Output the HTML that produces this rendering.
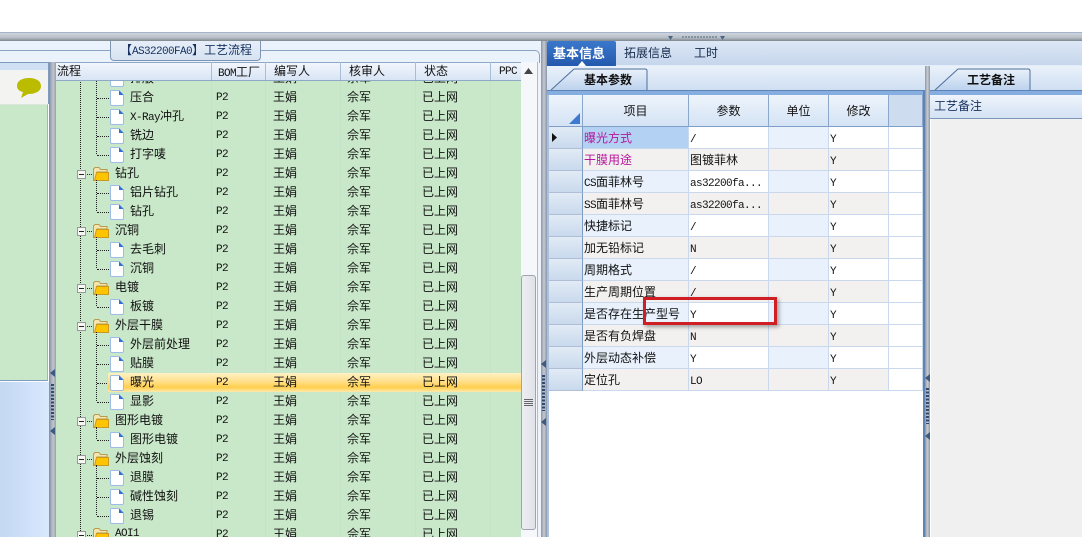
<!DOCTYPE html>
<html lang="zh"><head><meta charset="utf-8"><title>工艺流程</title>
<style>
html,body{margin:0;padding:0;background:#fff}
#p{position:relative;width:1082px;height:537px;overflow:hidden;background:#fff;font:12px/19px "WenQuanYi Zen Hei","Noto Sans CJK SC",sans-serif;color:#111}
#p div,#p svg{position:absolute}
.m{font-family:"Liberation Mono",monospace;font-size:11px;letter-spacing:-.6px}
#tree{left:56px;top:62px;width:465px;height:475px;overflow:hidden;background:#c9e7c9}
.r{left:-56px;width:521px;height:19px;white-space:nowrap}
.n,.f,.w,.s,.z{top:-1px}
.n{left:130px}.f{left:115px}.b{left:216px;top:1px}.w{left:273px}.s{left:347px}.z{left:422px}
#p svg.ic{left:110px;top:2px}#p svg.fd{left:93px;top:3px}#p svg.pb{left:77px;top:6px}
.vl{border-left:1px dotted #222;width:0}
.hl{left:97px;top:10px;width:12px;border-top:1px dotted #222;height:0}
.hl.k{left:87px;width:5px}
.cl{top:0;width:1px;height:475px;background:#c3e2c6}
.c{height:22px;line-height:22px;white-space:nowrap;overflow:hidden;border-right:1px solid #c9d8ec;border-bottom:1px solid #c9d8ec;box-sizing:border-box;padding-left:1px}
.c.m{line-height:26px}
.a{left:549px;width:34px;background:linear-gradient(#e2ebf6,#c9d9ec);border-right:1px solid #7c9cc4;border-bottom:1px solid #aebfd6}
.i{left:583px;width:106px}.v{left:689px;width:80px}.u{left:769px;width:60px}.x{left:829px;width:60px}.e{left:889px;width:34px;background:#fff}
.g{background:#f3f1ef}.l{background:#e8f1fc}.wh{background:#fff}
.h{top:95px;height:32px;line-height:32px;text-align:center;background:linear-gradient(#eef4fb,#d4e3f5);border-right:1px solid #8ba8cc;border-bottom:1px solid #7f9fc6;box-sizing:border-box}
.hd{top:62px;height:19px;line-height:18px;white-space:nowrap;box-sizing:border-box}
.sep{top:62px;width:1px;height:18px;background:#a9bdd6}
</style></head><body><div id="p">

<svg width="0" height="0" style="left:0;top:0"><defs>
<linearGradient id="tg" x1="0" y1="0" x2="0" y2="1"><stop offset="0" stop-color="#eaf1fa"/><stop offset="1" stop-color="#bcd2ee"/></linearGradient>
<g id="fi"><path d="M1.500.5H9L13.500 5V14Q13.500 15.500 12 15.500H2Q.5 15.500 .5 14V1.500Q.5.500 1.500.5Z" fill="#fff" stroke="#9dbce6"/><path d="M9 .5V5H13.500Z" fill="#2f6fd0"/></g>
<g id="fo"><path d="M.5 13.500V2L2 .5H6L7.500 2.500H14V5H4V13.500Z" fill="#f5e6b0" stroke="#b89a50"/><path d="M3.500 5.500H15.500V13.500H1.500Z" fill="#ffc400" stroke="#c99a20"/></g>
<g id="bx"><rect x=".5" y=".5" width="8" height="8" fill="#f6f6f2" stroke="#999"/><path d="M2 4.500H7" stroke="#222"/></g>
</defs></svg>

<!-- top chrome -->
<div style="left:0;top:32px;width:1082px;height:1px;background:#a4b3c9"></div>
<div style="left:0;top:33px;width:1082px;height:8px;background:linear-gradient(#cfd6df,#b7bdc5 60%,#7f858c)"></div>
<svg style="left:666px;top:36px" width="62" height="5"><path d="M2 0H7L4.500 4ZM59 0H54L56.500 4Z" fill="#4d6480"/><path d="M16 1H51" stroke="#4d6480" stroke-dasharray="2 1"/></svg>

<!-- left panel -->
<div style="left:0;top:41px;width:541px;height:21px;background:#eaf2fb"></div>
<div style="left:537px;top:62px;width:4px;height:475px;background:#eef3fa;border-left:1px solid #a9bdd6;box-sizing:border-box"></div>
<div style="left:0;top:50px;width:111px;height:1px;background:#8ba3c2"></div>
<div style="left:260px;top:50px;width:279px;height:12px;border-top:1px solid #8ba3c2;border-right:1px solid #8ba3c2;border-radius:0 5px 0 0"></div>
<div style="left:110px;top:41px;width:151px;height:20px;background:linear-gradient(#e6eef8,#d7e3f2);border:1px solid #7f95b2;border-top:0;border-radius:0 0 4px 4px;box-sizing:border-box;padding-left:9px;line-height:18px;color:#16315f;white-space:nowrap">【<span class="m">AS32200FA0</span>】工艺流程</div>

<div style="left:0;top:62px;width:49px;height:42px;background:#f3f3f1;border-top:1px solid #7f9bbd;border-right:1px solid #7f9bbd;box-sizing:border-box"></div>
<div style="left:0;top:63px;width:48px;height:7px;background:#cfe0f5"></div>
<svg style="left:16px;top:77px" width="26" height="22"><path d="M13 1C20 1 25 4 25 9C25 14 20 17 12 17L5 21L7 15C3 14 1 12 1 9C1 4 6 1 13 1Z" fill="#bbbb00"/></svg>
<div style="left:0;top:104px;width:48px;height:277px;background:#c9e7c9;border-right:1px solid #9fb7ac;border-bottom:1px solid #7f9bbd;border-top:1px solid #dbe6dd;box-sizing:border-box"></div>
<div style="left:0;top:382px;width:49px;height:155px;background:linear-gradient(90deg,#c4d8f3,#d8e8fd)"></div>

<!-- left splitter -->
<div style="left:49px;top:62px;width:7px;height:475px;background:linear-gradient(90deg,#7f8ea6,#c2c6cc 60%,#9aa0a8)"></div>
<svg style="left:49px;top:366px" width="7" height="70"><path d="M6 3V11L1 7ZM6 61V69L1 65Z" fill="#3d5a80"/><path d="M3.500 18V54" stroke="#2e4a72" stroke-width="3" stroke-dasharray="2 1.500"/></svg>

<!-- tree -->
<div id="tree">
<div class="cl" style="left:155px"></div><div class="cl" style="left:209px"></div><div class="cl" style="left:284px"></div><div class="cl" style="left:359px"></div><div class="cl" style="left:434px"></div>
<div class="vl" style="left:24px;top:0;height:475px"></div>
<div class="vl" style="left:40px;top:0;height:92px"></div>
<div class="r" style="top:7px"><svg class="ic" width="14" height="16"><use href="#fi"/></svg><div class="n">排版</div><div class="b m">P2</div><div class="w">王娟</div><div class="s">佘军</div><div class="z">已上网</div></div>
<div class="r" style="top:26px"><div class="hl"></div><svg class="ic" width="14" height="16"><use href="#fi"/></svg><div class="n">压合</div><div class="b m">P2</div><div class="w">王娟</div><div class="s">佘军</div><div class="z">已上网</div></div>
<div class="r" style="top:45px"><div class="hl"></div><svg class="ic" width="14" height="16"><use href="#fi"/></svg><div class="n"><span class="m">X-Ray</span>冲孔</div><div class="b m">P2</div><div class="w">王娟</div><div class="s">佘军</div><div class="z">已上网</div></div>
<div class="r" style="top:64px"><div class="hl"></div><svg class="ic" width="14" height="16"><use href="#fi"/></svg><div class="n">铣边</div><div class="b m">P2</div><div class="w">王娟</div><div class="s">佘军</div><div class="z">已上网</div></div>
<div class="r" style="top:83px"><div class="hl"></div><svg class="ic" width="14" height="16"><use href="#fi"/></svg><div class="n">打字唛</div><div class="b m">P2</div><div class="w">王娟</div><div class="s">佘军</div><div class="z">已上网</div></div>

<div class="r" style="top:102px"><svg class="pb" width="9" height="9"><use href="#bx"/></svg><div class="hl k"></div><svg class="fd" width="16" height="15"><use href="#fo"/></svg><div class="f">钻孔</div><div class="b m">P2</div><div class="w">王娟</div><div class="s">佘军</div><div class="z">已上网</div></div>
<div class="vl" style="left:40px;top:118px;height:31px"></div>
<div class="r" style="top:121px"><div class="hl"></div><svg class="ic" width="14" height="16"><use href="#fi"/></svg><div class="n">铝片钻孔</div><div class="b m">P2</div><div class="w">王娟</div><div class="s">佘军</div><div class="z">已上网</div></div>
<div class="r" style="top:140px"><div class="hl"></div><svg class="ic" width="14" height="16"><use href="#fi"/></svg><div class="n">钻孔</div><div class="b m">P2</div><div class="w">王娟</div><div class="s">佘军</div><div class="z">已上网</div></div>

<div class="r" style="top:159px"><svg class="pb" width="9" height="9"><use href="#bx"/></svg><div class="hl k"></div><svg class="fd" width="16" height="15"><use href="#fo"/></svg><div class="f">沉铜</div><div class="b m">P2</div><div class="w">王娟</div><div class="s">佘军</div><div class="z">已上网</div></div>
<div class="vl" style="left:40px;top:175px;height:31px"></div>
<div class="r" style="top:178px"><div class="hl"></div><svg class="ic" width="14" height="16"><use href="#fi"/></svg><div class="n">去毛刺</div><div class="b m">P2</div><div class="w">王娟</div><div class="s">佘军</div><div class="z">已上网</div></div>
<div class="r" style="top:197px"><div class="hl"></div><svg class="ic" width="14" height="16"><use href="#fi"/></svg><div class="n">沉铜</div><div class="b m">P2</div><div class="w">王娟</div><div class="s">佘军</div><div class="z">已上网</div></div>

<div class="r" style="top:216px"><svg class="pb" width="9" height="9"><use href="#bx"/></svg><div class="hl k"></div><svg class="fd" width="16" height="15"><use href="#fo"/></svg><div class="f">电镀</div><div class="b m">P2</div><div class="w">王娟</div><div class="s">佘军</div><div class="z">已上网</div></div>
<div class="vl" style="left:40px;top:232px;height:12px"></div>
<div class="r" style="top:235px"><div class="hl"></div><svg class="ic" width="14" height="16"><use href="#fi"/></svg><div class="n">板镀</div><div class="b m">P2</div><div class="w">王娟</div><div class="s">佘军</div><div class="z">已上网</div></div>

<div class="r" style="top:254px"><svg class="pb" width="9" height="9"><use href="#bx"/></svg><div class="hl k"></div><svg class="fd" width="16" height="15"><use href="#fo"/></svg><div class="f">外层干膜</div><div class="b m">P2</div><div class="w">王娟</div><div class="s">佘军</div><div class="z">已上网</div></div>
<div class="vl" style="left:40px;top:270px;height:69px"></div>
<div class="r" style="top:273px"><div class="hl"></div><svg class="ic" width="14" height="16"><use href="#fi"/></svg><div class="n">外层前处理</div><div class="b m">P2</div><div class="w">王娟</div><div class="s">佘军</div><div class="z">已上网</div></div>
<div class="r" style="top:292px"><div class="hl"></div><svg class="ic" width="14" height="16"><use href="#fi"/></svg><div class="n">贴膜</div><div class="b m">P2</div><div class="w">王娟</div><div class="s">佘军</div><div class="z">已上网</div></div>
<div class="r" style="top:311px"><div class="hl"></div><div style="left:108px;top:0;width:413px;height:19px;background:linear-gradient(#fff1c4,#ffe08a 45%,#ffcf4d 75%,#ffe9ac)"></div><svg class="ic" width="14" height="16"><use href="#fi"/></svg><div class="n">曝光</div><div class="b m">P2</div><div class="w">王娟</div><div class="s">佘军</div><div class="z">已上网</div></div>
<div class="r" style="top:330px"><div class="hl"></div><svg class="ic" width="14" height="16"><use href="#fi"/></svg><div class="n">显影</div><div class="b m">P2</div><div class="w">王娟</div><div class="s">佘军</div><div class="z">已上网</div></div>

<div class="r" style="top:349px"><svg class="pb" width="9" height="9"><use href="#bx"/></svg><div class="hl k"></div><svg class="fd" width="16" height="15"><use href="#fo"/></svg><div class="f">图形电镀</div><div class="b m">P2</div><div class="w">王娟</div><div class="s">佘军</div><div class="z">已上网</div></div>
<div class="vl" style="left:40px;top:365px;height:12px"></div>
<div class="r" style="top:368px"><div class="hl"></div><svg class="ic" width="14" height="16"><use href="#fi"/></svg><div class="n">图形电镀</div><div class="b m">P2</div><div class="w">王娟</div><div class="s">佘军</div><div class="z">已上网</div></div>

<div class="r" style="top:387px"><svg class="pb" width="9" height="9"><use href="#bx"/></svg><div class="hl k"></div><svg class="fd" width="16" height="15"><use href="#fo"/></svg><div class="f">外层蚀刻</div><div class="b m">P2</div><div class="w">王娟</div><div class="s">佘军</div><div class="z">已上网</div></div>
<div class="vl" style="left:40px;top:403px;height:50px"></div>
<div class="r" style="top:406px"><div class="hl"></div><svg class="ic" width="14" height="16"><use href="#fi"/></svg><div class="n">退膜</div><div class="b m">P2</div><div class="w">王娟</div><div class="s">佘军</div><div class="z">已上网</div></div>
<div class="r" style="top:425px"><div class="hl"></div><svg class="ic" width="14" height="16"><use href="#fi"/></svg><div class="n">碱性蚀刻</div><div class="b m">P2</div><div class="w">王娟</div><div class="s">佘军</div><div class="z">已上网</div></div>
<div class="r" style="top:444px"><div class="hl"></div><svg class="ic" width="14" height="16"><use href="#fi"/></svg><div class="n">退锡</div><div class="b m">P2</div><div class="w">王娟</div><div class="s">佘军</div><div class="z">已上网</div></div>

<div class="r" style="top:463px"><svg class="pb" width="9" height="9"><use href="#bx"/></svg><div class="hl k"></div><svg class="fd" width="16" height="15"><use href="#fo"/></svg><div class="f m" style="top:0">AOI1</div><div class="b m">P2</div><div class="w">王娟</div><div class="s">佘军</div><div class="z">已上网</div></div>
</div>

<!-- tree header -->
<div style="left:56px;top:62px;width:465px;height:19px;background:linear-gradient(#f2f6fc,#d8e5f5);border-top:1px solid #8ea8c8;border-bottom:1px solid #8ea8c8;box-sizing:border-box"></div>
<div class="hd" style="left:57px">流程</div>
<div class="hd" style="left:218px;line-height:19px"><span class="m">BOM</span>工厂</div>
<div class="hd" style="left:274px">编写人</div>
<div class="hd" style="left:349px">核审人</div>
<div class="hd" style="left:424px">状态</div>
<div class="hd m" style="left:499px;line-height:20px">PPC</div>
<div class="sep" style="left:211px"></div><div class="sep" style="left:265px"></div><div class="sep" style="left:340px"></div><div class="sep" style="left:415px"></div><div class="sep" style="left:490px"></div>

<!-- scrollbar -->
<div style="left:521px;top:62px;width:16px;height:475px;background:#f5f7fb;box-sizing:border-box"></div>
<svg style="left:523px;top:67px" width="11" height="8"><path d="M5.500 1L10 7H1Z" fill="#444"/></svg>
<div style="left:521px;top:275px;width:15px;height:255px;background:linear-gradient(90deg,#eceef3,#dfe2e9);border:1px solid #9da5b0;border-radius:3px;box-sizing:border-box"></div>
<svg style="left:524px;top:399px" width="10" height="7"><path d="M0 .5H9M0 2.500H9M0 4.500H9M0 6.500H9" stroke="#666"/></svg>

<!-- middle splitter -->
<div style="left:541px;top:41px;width:6px;height:496px;background:linear-gradient(90deg,#8b95a5,#c6c9cf 50%,#8796ad)"></div>
<svg style="left:541px;top:359px" width="6" height="70"><path d="M5 1V9L0 5ZM5 59V67L0 63Z" fill="#3d5a80"/><path d="M2.500 16V52" stroke="#2e4a72" stroke-width="3" stroke-dasharray="2 1.500"/></svg>

<!-- right top tabs -->
<div style="left:547px;top:41px;width:535px;height:25px;background:linear-gradient(#dce7f6,#c6d6ec);border-bottom:1px solid #e4ecf7;box-sizing:border-box"></div>
<div style="left:547px;top:41px;width:69px;height:26px;background:linear-gradient(#3a78cc,#2358ab);border-radius:2px;color:#fff;font-weight:bold;font-size:13px;line-height:23px;padding-left:6px;box-sizing:border-box;white-space:nowrap">基本信息</div>
<svg style="left:577px;top:61px" width="10" height="6"><path d="M5 0L10 6H0Z" fill="#fff"/></svg>
<div style="left:624px;top:41px;height:23px;line-height:23px;color:#15294a">拓展信息</div>
<div style="left:694px;top:41px;height:23px;line-height:23px;color:#15294a">工时</div>

<!-- second tab bar -->
<div style="left:547px;top:66px;width:535px;height:24px;background:linear-gradient(#eaf1fa,#cfdff2)"></div>
<svg style="left:550px;top:68px" width="100" height="23"><path d="M1 22L24 1H95Q97 1 97 3V22Z" fill="url(#tg)"/><path d="M1 22L24 1H95Q97 1 97 3V22" fill="none" stroke="#4d6f9c"/></svg>
<div style="left:584px;top:70px;line-height:19px;font-weight:bold;white-space:nowrap">基本参数</div>
<div style="left:547px;top:90px;width:378px;height:5px;background:#86ade0;border-top:1px solid #5f83b2;box-sizing:border-box"></div>

<!-- table frame -->
<div style="left:547px;top:95px;width:378px;height:442px;background:#fff"></div>
<div style="left:547px;top:95px;width:2px;height:442px;background:#a9c0de"></div>
<div style="left:923px;top:90px;width:2px;height:447px;background:#5f83b2"></div>

<div class="h" style="left:549px;width:34px"></div>
<svg style="left:569px;top:113px" width="12" height="12"><path d="M11 0V11H0Z" fill="#3d7ad0"/></svg>
<div class="h" style="left:583px;width:106px">项目</div>
<div class="h" style="left:689px;width:80px">参数</div>
<div class="h" style="left:769px;width:60px">单位</div>
<div class="h" style="left:829px;width:60px">修改</div>
<div class="h" style="left:889px;width:34px;background:#cddcee"></div>

<!-- rows -->
<div class="c a" style="top:127px"></div><svg style="left:552px;top:133px" width="5" height="9"><path d="M0 0L5 4.500L0 9Z" fill="#111"/></svg><div class="c i" style="top:127px;background:#b3d1f2;color:#b5179e">曝光方式</div><div class="c v wh m" style="top:127px">/</div><div class="c u l" style="top:127px"></div><div class="c x wh m" style="top:127px">Y</div><div class="c e" style="top:127px"></div>
<div class="c a" style="top:149px"></div><div class="c i g" style="top:149px;color:#b5179e">干膜用途</div><div class="c v g" style="top:149px">图镀菲林</div><div class="c u g" style="top:149px"></div><div class="c x g m" style="top:149px">Y</div><div class="c e" style="top:149px"></div>
<div class="c a" style="top:171px"></div><div class="c i l" style="top:171px"><span class="m">CS</span>面菲林号</div><div class="c v wh m" style="top:171px">as32200fa...</div><div class="c u l" style="top:171px"></div><div class="c x wh m" style="top:171px">Y</div><div class="c e" style="top:171px"></div>
<div class="c a" style="top:193px"></div><div class="c i g" style="top:193px"><span class="m">SS</span>面菲林号</div><div class="c v g m" style="top:193px">as32200fa...</div><div class="c u g" style="top:193px"></div><div class="c x g m" style="top:193px">Y</div><div class="c e" style="top:193px"></div>
<div class="c a" style="top:215px"></div><div class="c i l" style="top:215px">快捷标记</div><div class="c v wh m" style="top:215px">/</div><div class="c u l" style="top:215px"></div><div class="c x wh m" style="top:215px">Y</div><div class="c e" style="top:215px"></div>
<div class="c a" style="top:237px"></div><div class="c i g" style="top:237px">加无铅标记</div><div class="c v g m" style="top:237px">N</div><div class="c u g" style="top:237px"></div><div class="c x g m" style="top:237px">Y</div><div class="c e" style="top:237px"></div>
<div class="c a" style="top:259px"></div><div class="c i l" style="top:259px">周期格式</div><div class="c v wh m" style="top:259px">/</div><div class="c u l" style="top:259px"></div><div class="c x wh m" style="top:259px">Y</div><div class="c e" style="top:259px"></div>
<div class="c a" style="top:281px"></div><div class="c i g" style="top:281px">生产周期位置</div><div class="c v g m" style="top:281px">/</div><div class="c u g" style="top:281px"></div><div class="c x g m" style="top:281px">Y</div><div class="c e" style="top:281px"></div>
<div class="c a" style="top:303px"></div><div class="c i l" style="top:303px">是否存在生产型号</div><div class="c v wh m" style="top:303px">Y</div><div class="c u l" style="top:303px"></div><div class="c x wh m" style="top:303px">Y</div><div class="c e" style="top:303px"></div>
<div class="c a" style="top:325px"></div><div class="c i g" style="top:325px">是否有负焊盘</div><div class="c v g m" style="top:325px">N</div><div class="c u g" style="top:325px"></div><div class="c x g m" style="top:325px">Y</div><div class="c e" style="top:325px"></div>
<div class="c a" style="top:347px"></div><div class="c i l" style="top:347px">外层动态补偿</div><div class="c v wh m" style="top:347px">Y</div><div class="c u l" style="top:347px"></div><div class="c x wh m" style="top:347px">Y</div><div class="c e" style="top:347px"></div>
<div class="c a" style="top:369px"></div><div class="c i g" style="top:369px">定位孔</div><div class="c v g m" style="top:369px">LO</div><div class="c u g" style="top:369px"></div><div class="c x g m" style="top:369px">Y</div><div class="c e" style="top:369px"></div>

<!-- red annotation -->
<div style="left:643px;top:297px;width:134px;height:28px;border:3px solid #cf1f24;box-sizing:border-box;box-shadow:2px 2px 4px rgba(0,0,0,.35)"></div>

<!-- right splitter -->
<div style="left:925px;top:66px;width:5px;height:471px;background:linear-gradient(90deg,#8f96a2,#c9ccd1 50%,#8f96a2)"></div>
<svg style="left:925px;top:374px" width="5" height="70"><path d="M5 0V8L0 4ZM5 58V66L0 62Z" fill="#3d5a80"/><path d="M2.500 14V50" stroke="#2e4a72" stroke-width="3" stroke-dasharray="2 1.500"/></svg>

<!-- right panel -->
<svg style="left:934px;top:68px" width="100" height="23"><path d="M1 22L24 1H94Q96 1 96 3V22Z" fill="url(#tg)"/><path d="M1 22L24 1H94Q96 1 96 3V22" fill="none" stroke="#4d6f9c"/></svg>
<div style="left:967px;top:70px;line-height:19px;font-weight:bold;white-space:nowrap">工艺备注</div>
<div style="left:930px;top:90px;width:152px;height:5px;background:#86ade0;border-top:1px solid #5f83b2;box-sizing:border-box"></div>
<div style="left:930px;top:95px;width:152px;height:24px;background:linear-gradient(#eff4fb,#d3e2f4);border-bottom:1px solid #7f97b8;box-sizing:border-box"></div>
<div style="left:934px;top:96px;line-height:19px;color:#16315f;white-space:nowrap">工艺备注</div>
<div style="left:931px;top:119px;width:151px;height:418px;background:#f0f0f0"></div>

</div></body></html>
